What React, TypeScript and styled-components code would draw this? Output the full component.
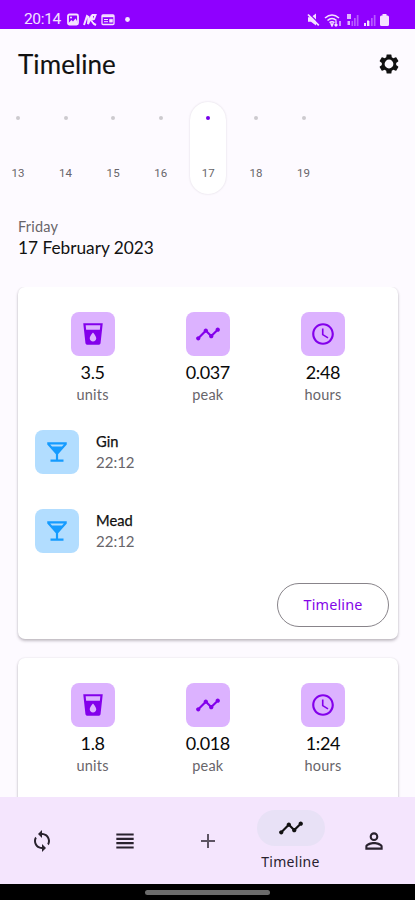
import React from 'react';
import styled, { createGlobalStyle } from 'styled-components';
import {
  MdSettings,
  MdSync,
  MdViewHeadline,
  MdAdd,
  MdTimeline,
  MdPersonOutline,
  MdAccessTime,
  MdLocalDrink,
  MdLocalBar,
} from 'react-icons/md';

const GlobalStyle = createGlobalStyle`
  * { box-sizing: border-box; }
  body { margin: 0; background: #fdfaff; }
`;

const Screen = styled.div`
  display: flex;
  flex-direction: column;
  width: 415px;
  height: 900px;
  overflow: hidden;
  background: #fdfaff;
  color: #111;
  font-family: Lato, 'Open Sans', sans-serif;
  svg { display: block; flex: none; }
`;

const StatusBar = styled.div`
  display: flex;
  justify-content: space-between;
  flex: none;
  height: 29px;
  padding: 12px 26px 0 24px;
  background: #8f00ff;
  color: #f5e2ff;
  font: 15.5px/15px Roboto, sans-serif;
`;

const StatusGroup = styled.div<{ $gap: number }>`
  display: flex;
  align-items: center;
  gap: ${(p) => p.$gap}px;
  height: 15px;
`;

const Clock = styled.span`
  width: 38px;
  margin-right: 1px;
  letter-spacing: -0.35px;
`;

const Header = styled.header`
  display: flex;
  align-items: center;
  justify-content: space-between;
  flex: none;
  height: 70px;
  padding: 0 14px 0 18px;
`;

const Title = styled.h1`
  margin: 0;
  font-size: 26px;
  line-height: 32px;
  font-weight: 400;
  letter-spacing: 0.08px;
  -webkit-text-stroke: 0.15px #111;
`;

const Days = styled.div`
  display: flex;
  flex: none;
  gap: 11.6px;
  height: 95px;
  margin: 3px 0 0 0;
`;

const Day = styled.div<{ $active?: boolean }>`
  display: flex;
  flex-direction: column;
  align-items: center;
  justify-content: space-between;
  flex: none;
  width: 36px;
  height: 92px;
  padding: 14px 0;
  border-radius: 18px;
  background: ${(p) => (p.$active ? '#fff' : 'transparent')};
  box-shadow: ${(p) => (p.$active ? '0 0 2px rgba(60, 40, 70, 0.18)' : 'none')};
  color: #68656a;
  font: 11.5px/14px Roboto, sans-serif;
  letter-spacing: 0.1px;
`;

const Dot = styled.i<{ $active?: boolean }>`
  width: 4px;
  height: 4px;
  border-radius: 2px;
  background: ${(p) => (p.$active ? '#7500ea' : '#cdcacf')};
`;

const DateBlock = styled.div`
  flex: none;
  height: 90px;
  padding: 20px 18px 0;
`;

const Weekday = styled.div`
  color: #68656a;
  font-size: 14.5px;
  line-height: 19px;
  letter-spacing: 0.2px;
`;

const FullDate = styled.div`
  font-size: 17.3px;
  line-height: 24px;
  letter-spacing: -0.02px;
`;

const Feed = styled.main`
  display: flex;
  flex-direction: column;
  flex: 1;
  gap: 18.5px;
  min-height: 0;
  padding: 0 17px 0 18px;
  overflow: hidden;
`;

const Card = styled.section`
  flex: none;
  height: 352px;
  padding: 25px 9px 0 17px;
  border-radius: 7px;
  background: #fff;
  box-shadow: 0 2px 3px rgba(50, 40, 55, 0.28), 0 0 2px rgba(50, 40, 55, 0.12);
`;

const Stats = styled.div`
  display: grid;
  grid-template-columns: repeat(3, 115.2px);
  height: 118px;
`;

const Stat = styled.div`
  display: flex;
  flex-direction: column;
  align-items: center;
`;

const Tile = styled.div<{ $blue?: boolean }>`
  display: grid;
  place-items: center;
  flex: none;
  width: 44px;
  height: 44px;
  border-radius: 8px;
  background: ${(p) => (p.$blue ? '#b2ddff' : '#dcb2ff')};
  color: ${(p) => (p.$blue ? '#159bff' : '#8300eb')};
`;

const Value = styled.div`
  margin-top: 4px;
  color: #090909;
  font-size: 18px;
  line-height: 24px;
  letter-spacing: -0.35px;
`;

const Caption = styled.div`
  color: #68656a;
  font-size: 14.5px;
  line-height: 21px;
  letter-spacing: 0.2px;
`;

const Drink = styled.div`
  display: flex;
  gap: 17px;
  height: 78.5px;
`;

const DrinkText = styled.div`
  padding-top: 1px;
`;

const DrinkName = styled.div`
  font-size: 14.7px;
  line-height: 21px;
  -webkit-text-stroke: 0.25px #111;
`;

const DrinkTime = styled.div`
  color: #68656a;
  font-size: 15px;
  line-height: 21px;
`;

const TimelineButton = styled.button`
  display: block;
  width: 112px;
  height: 44px;
  margin: -4px 0 0 auto;
  padding: 0 0 2px;
  border: 1px solid #88848a;
  border-radius: 22px;
  background: transparent;
  color: #8205e8;
  font: 14.4px 'Noto Sans', sans-serif;
  letter-spacing: 0.15px;
`;

const NavBar = styled.nav`
  display: grid;
  grid-template-columns: repeat(5, 83px);
  flex: none;
  height: 87px;
  background: #f4e5fd;
`;

const NavItem = styled.div<{ $muted?: boolean }>`
  display: flex;
  flex-direction: column;
  align-items: center;
  justify-content: center;
  color: ${(p) => (p.$muted ? '#5d5463' : '#29222e')};
  font: 14px/20px 'Noto Sans', sans-serif;
  letter-spacing: 0.3px;
`;

const ActivePill = styled.div`
  display: grid;
  place-items: center;
  width: 68px;
  height: 36px;
  margin: 0 0 6px;
  border-radius: 18px;
  background: #e8e1f6;
  color: #111;
`;

const GestureBar = styled.div`
  display: flex;
  justify-content: center;
  flex: none;
  height: 16px;
  padding-top: 6px;
  background: #000;
`;

const Handle = styled.div`
  width: 125px;
  height: 5px;
  border-radius: 3px;
  background: #6b6b6b;
`;

const GearIcon = () => (
  <svg width="24" height="24" viewBox="0 0 24 24">
    <MdSettings size={24} />
    <circle cx="12" cy="12" r="4.4" fill="#fdfaff" />
  </svg>
);

const PictureIcon = () => (
  <svg width="12" height="13" viewBox="0 0 12 13" fill="none" stroke="currentColor">
    <rect x="1" y="1.5" width="10" height="10" rx="1.5" strokeWidth="1.8" />
    <path d="M2 9.5 4.5 7 6 8.5l2.5-3L10 8v3H2z" fill="currentColor" stroke="none" />
    <circle cx="4" cy="4.5" r="1" fill="currentColor" stroke="none" />
  </svg>
);

const BrandMarkIcon = () => (
  <svg width="14" height="13" viewBox="0 0 14 13" fill="none" stroke="currentColor" strokeWidth="2">
    <path d="M1 12 4 3l1.5 1L5 11 9 2v7M9 2h3.5L11 6 8 7l3 4 2 1" />
  </svg>
);

const NewsIcon = () => (
  <svg width="14" height="13" viewBox="0 0 14 13" fill="none" stroke="currentColor">
    <rect x="1" y="2" width="12" height="9.5" rx="1" strokeWidth="1.3" />
    <path d="M1 3.2h12" strokeWidth="2" />
    <path d="M3 6.5h4M3 8.7h4" />
    <path d="M8.5 6.2h3v3h-3z" fill="currentColor" strokeWidth=".5" />
  </svg>
);

const BulletIcon = () => (
  <svg width="14" height="13" viewBox="0 0 14 13">
    <circle cx="8.5" cy="6.5" r="2.4" fill="currentColor" />
  </svg>
);

const MutedIcon = () => (
  <svg width="13" height="13" viewBox="0 0 13 13">
    <path d="M1 4.2h3L9 .5v12L4 8.8H1z" fill="currentColor" />
    <path d="M2 .5 13 11.5" stroke="#8f00ff" strokeWidth="1.3" />
    <path d="M1 1.5 11.8 12.3" stroke="currentColor" strokeWidth="1.7" />
  </svg>
);

const WifiIcon = () => (
  <svg width="18" height="14" viewBox="0 0 18 14" fill="none" stroke="currentColor" strokeWidth="1.6">
    <path d="M1 5Q8 -1 15 5M3.5 7.5Q8 3.5 12.5 7.5M5.5 9.7Q8 7.8 10.5 9.7" />
    <path d="M7 11h2l-1 2zM12 8v5M10.5 11.5 12 13l1.5-1.5M16 13V8" strokeWidth="1.3" />
  </svg>
);

const SignalIcon = ({ badge }: { badge?: boolean }) => (
  <svg width="13" height="14" viewBox="0 0 13 14">
    {badge ? (
      <path d="M1 1h4v5H1zM1.5 8H4v4H1.5z" fill="currentColor" opacity=".8" />
    ) : (
      <path d="M1 10h2v3H1zM4 7.5h2V13H4z" fill="currentColor" />
    )}
    <path d="M5.5 8h1.6v5H5.5zM8 5h1.7v8H8zM10.8 2h1.7v11h-1.7z" fill="currentColor" opacity=".4" />
  </svg>
);

const BatteryIcon = () => (
  <svg width="9" height="13" viewBox="0 0 9 13">
    <path d="M2.5 1h4v1.5h1Q9 2.5 9 4v7.5Q9 13 7.5 13h-6Q0 13 0 11.5V4q0-1.5 1.5-1.5h1z" fill="currentColor" />
  </svg>
);

interface SummaryProps {
  units: string;
  peak: string;
  hours: string;
}

const Summary = ({ units, peak, hours }: SummaryProps) => (
  <Stats>
    <Stat>
      <Tile><MdLocalDrink size={26} /></Tile>
      <Value>{units}</Value>
      <Caption>units</Caption>
    </Stat>
    <Stat>
      <Tile><MdTimeline size={26} /></Tile>
      <Value>{peak}</Value>
      <Caption>peak</Caption>
    </Stat>
    <Stat>
      <Tile><MdAccessTime size={26} /></Tile>
      <Value>{hours}</Value>
      <Caption>hours</Caption>
    </Stat>
  </Stats>
);

const drinks = [
  { name: 'Gin', time: '22:12' },
  { name: 'Mead', time: '22:12' },
];

export default function App() {
  return (
    <Screen>
      <GlobalStyle />
      <StatusBar>
        <StatusGroup $gap={4}>
          <Clock>20:14</Clock>
          <PictureIcon />
          <BrandMarkIcon />
          <NewsIcon />
          <BulletIcon />
        </StatusGroup>
        <StatusGroup $gap={4}>
          <MutedIcon />
          <WifiIcon />
          <SignalIcon badge />
          <SignalIcon />
          <BatteryIcon />
        </StatusGroup>
      </StatusBar>
      <Header>
        <Title>Timeline</Title>
        <GearIcon />
      </Header>
      <Days>
        {[13, 14, 15, 16, 17, 18, 19].map((day) => (
          <Day key={day} $active={day === 17}>
            <Dot $active={day === 17} />
            {day}
          </Day>
        ))}
      </Days>
      <DateBlock>
        <Weekday>Friday</Weekday>
        <FullDate>17 February 2023</FullDate>
      </DateBlock>
      <Feed>
        <Card>
          <Summary units="3.5" peak="0.037" hours="2:48" />
          {drinks.map((drink) => (
            <Drink key={drink.name}>
              <Tile $blue><MdLocalBar size={26} /></Tile>
              <DrinkText>
                <DrinkName>{drink.name}</DrinkName>
                <DrinkTime>{drink.time}</DrinkTime>
              </DrinkText>
            </Drink>
          ))}
          <TimelineButton>Timeline</TimelineButton>
        </Card>
        <Card>
          <Summary units="1.8" peak="0.018" hours="1:24" />
        </Card>
      </Feed>
      <NavBar>
        <NavItem><MdSync size={24} /></NavItem>
        <NavItem><MdViewHeadline size={26} /></NavItem>
        <NavItem $muted><MdAdd size={24} /></NavItem>
        <NavItem>
          <ActivePill><MdTimeline size={26} /></ActivePill>
          Timeline
        </NavItem>
        <NavItem><MdPersonOutline size={26} /></NavItem>
      </NavBar>
      <GestureBar><Handle /></GestureBar>
    </Screen>
  );
}
